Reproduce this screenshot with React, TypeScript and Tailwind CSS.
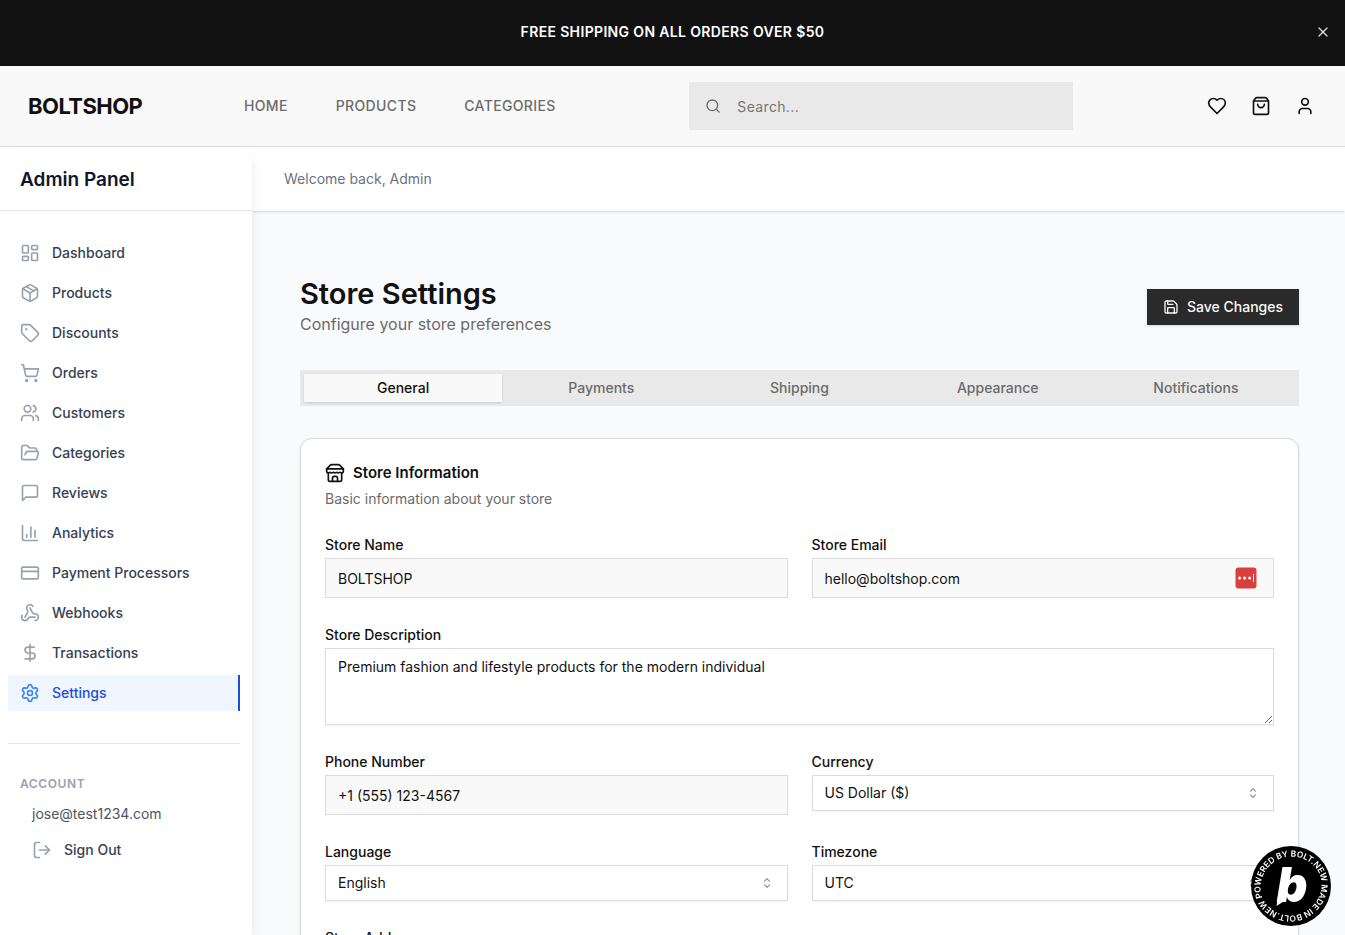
import { useState } from "react";
import type { ComponentType, ReactNode } from "react";
import {
  ChartColumn,
  CreditCard,
  DollarSign,
  FolderOpen,
  LayoutDashboard,
  LogOut,
  Package,
  Save,
  Search,
  Settings,
  ShoppingBag,
  ShoppingCart,
  Tag,
  User,
  Users,
  Webhook,
  X,
} from "lucide-react";

interface IconProps {
  className?: string;
}

interface NavItem {
  label: string;
  icon: ComponentType<IconProps>;
}

function StrokeIcon({ className, children }: { className?: string; children: ReactNode }) {
  return (
    <svg
      viewBox="0 0 24 24"
      fill="none"
      stroke="currentColor"
      strokeWidth="2"
      strokeLinecap="round"
      strokeLinejoin="round"
      aria-hidden="true"
      className={className}
    >
      {children}
    </svg>
  );
}

function HeartIcon({ className }: IconProps) {
  return (
    <StrokeIcon className={className}>
      <path d="M19 14c1.49-1.46 3-3.21 3-5.5A5.5 5.5 0 0 0 16.5 3c-1.76 0-3 .5-4.5 2-1.5-1.5-2.74-2-4.5-2A5.5 5.5 0 0 0 2 8.5c0 2.3 1.5 4.05 3 5.5l7 7Z" />
    </StrokeIcon>
  );
}

function MessageIcon({ className }: IconProps) {
  return (
    <StrokeIcon className={className}>
      <path d="M21 15a2 2 0 0 1-2 2H7l-4 4V5a2 2 0 0 1 2-2h14a2 2 0 0 1 2 2z" />
    </StrokeIcon>
  );
}

function StoreIcon({ className }: IconProps) {
  return (
    <StrokeIcon className={className}>
      <path d="m2 7 4.41-4.41A2 2 0 0 1 7.83 2h8.34a2 2 0 0 1 1.42.59L22 7" />
      <path d="M4 12v8a2 2 0 0 0 2 2h12a2 2 0 0 0 2-2v-8" />
      <path d="M15 22v-4a2 2 0 0 0-2-2h-2a2 2 0 0 0-2 2v4" />
      <path d="M2 7h20" />
      <path d="M22 7v3a2 2 0 0 1-2 2a2.7 2.7 0 0 1-1.59-.63.7.7 0 0 0-.82 0A2.7 2.7 0 0 1 16 12a2.7 2.7 0 0 1-1.59-.63.7.7 0 0 0-.82 0A2.7 2.7 0 0 1 12 12a2.7 2.7 0 0 1-1.59-.63.7.7 0 0 0-.82 0A2.7 2.7 0 0 1 8 12a2.7 2.7 0 0 1-1.59-.63.7.7 0 0 0-.82 0A2.7 2.7 0 0 1 4 12a2 2 0 0 1-2-2V7" />
    </StrokeIcon>
  );
}

const navItems: NavItem[] = [
  { label: "Dashboard", icon: LayoutDashboard },
  { label: "Products", icon: Package },
  { label: "Discounts", icon: Tag },
  { label: "Orders", icon: ShoppingCart },
  { label: "Customers", icon: Users },
  { label: "Categories", icon: FolderOpen },
  { label: "Reviews", icon: MessageIcon },
  { label: "Analytics", icon: ChartColumn },
  { label: "Payment Processors", icon: CreditCard },
  { label: "Webhooks", icon: Webhook },
  { label: "Transactions", icon: DollarSign },
  { label: "Settings", icon: Settings },
];

const tabs = ["General", "Payments", "Shipping", "Appearance", "Notifications"];

function PromoBar({ onClose }: { onClose: () => void }) {
  return (
    <div className="flex h-[66px] shrink-0 items-center bg-[#111] pb-0.5 text-white">
      <p className="flex-1 pl-9 text-center text-sm font-semibold tracking-wide uppercase">
        Free shipping on all orders over $50
      </p>
      <button type="button" aria-label="Dismiss" onClick={onClose} className="mr-2 p-1.5 text-white/80 hover:text-white">
        <X className="size-4" />
      </button>
    </div>
  );
}

function StoreHeader() {
  return (
    <header className="flex h-[81px] shrink-0 items-center justify-between border-b border-[#dcdcdc] bg-[#f9f9f9] pr-[22px] pl-7">
      <div className="flex items-center">
        <a href="#" className="w-54 text-[22px] leading-8 font-bold tracking-tight text-[#111]">BOLTSHOP</a>
        <nav className="flex gap-12 pr-2 text-sm font-medium tracking-wide text-[#6b6b6b]">
          <a href="#">HOME</a>
          <a href="#">PRODUCTS</a>
          <a href="#">CATEGORIES</a>
        </nav>
      </div>
      <div className="relative w-96">
        <Search className="pointer-events-none absolute top-4 left-4 size-4 text-[#6b6b6b]" />
        <input
          type="search"
          aria-label="Search"
          placeholder="Search..."
          className="h-12 w-full bg-[#e9e9e9] pr-4 pl-12 text-sm tracking-wide outline-none placeholder:text-[#757575]"
        />
      </div>
      <div className="flex gap-2 text-[#111]">
        <button type="button" aria-label="Wishlist" className="p-2"><HeartIcon className="size-5" /></button>
        <button type="button" aria-label="Cart" className="p-2"><ShoppingBag className="size-5" /></button>
        <button type="button" aria-label="Account" className="p-2"><User className="size-5" /></button>
      </div>
    </header>
  );
}

function Sidebar() {
  return (
    <aside className="z-10 flex w-[252px] shrink-0 flex-col bg-white shadow-lg">
      <div className="flex h-16 shrink-0 items-center border-b border-gray-200 px-5 pt-1">
        <h2 className="text-[19px] font-semibold text-gray-900">Admin Panel</h2>
      </div>
      <div className="pt-6 pr-3 pl-2">
        <nav className="flex flex-col gap-1">
          {navItems.map(({ label, icon: Icon }) => {
            const active = label === "Settings";
            return (
              <a
                key={label}
                href="#"
                className={`flex h-9 items-center gap-3 px-3 text-sm font-medium ${
                  active ? "border-r-2 border-[#1d4ed8] bg-[#eff6ff] text-[#1d4ed8]" : "text-gray-700 hover:bg-gray-50"
                }`}
              >
                <Icon className={`size-5 ${active ? "text-[#3b82f6]" : "text-gray-400"}`} />
                {label}
              </a>
            );
          })}
        </nav>
        <div className="mt-8 border-t border-gray-200 px-3 pt-8">
          <h3 className="text-xs font-semibold tracking-wider text-gray-400 uppercase">Account</h3>
          <p className="px-3 pt-3 pb-2 text-sm text-gray-600">jose@test1234.com</p>
          <button type="button" className="flex h-9 w-full items-center gap-3 px-3 text-sm font-medium text-gray-700">
            <LogOut className="size-5 text-gray-400" />
            Sign Out
          </button>
        </div>
      </div>
    </aside>
  );
}

function Field({ id, label, children }: { id: string; label: string; children: ReactNode }) {
  return (
    <div>
      <label htmlFor={id} className="flex h-[26px] items-center text-sm font-medium text-[#111]">{label}</label>
      {children}
    </div>
  );
}

function TextField({ id, label, type = "text", value, children }: { id: string; label: string; type?: string; value: string; children?: ReactNode }) {
  return (
    <Field id={id} label={label}>
      <div className="relative">
        <input
          id={id}
          type={type}
          defaultValue={value}
          className="block h-10 w-full border border-[#dcdcdc] bg-[#f9f9f9] px-3 text-sm text-[#111]"
        />
        {children}
      </div>
    </Field>
  );
}

function SelectField({ id, label, options }: { id: string; label: string; options: string[] }) {
  return (
    <Field id={id} label={label}>
      <div className="relative">
        <select id={id} className="block h-9 w-full appearance-none border border-[#dcdcdc] bg-white px-3 text-sm text-[#111] shadow-xs">
          {options.map(o => <option key={o}>{o}</option>)}
        </select>
        <svg
          viewBox="0 0 15 15"
          fill="none"
          stroke="currentColor"
          strokeWidth="1"
          strokeLinecap="round"
          strokeLinejoin="round"
          aria-hidden="true"
          className="pointer-events-none absolute top-2.5 right-[13px] size-4 text-[#111] opacity-50"
        >
          <path d="M5.25 5.75 7.5 3.5l2.25 2.25M5.25 9.25 7.5 11.5l2.25-2.25" />
        </svg>
      </div>
    </Field>
  );
}

// Password manager button shown inside the email input
function AutofillButton() {
  return (
    <button type="button" aria-label="Autofill" className="absolute top-2 right-4">
      <svg viewBox="0 0 24 24" className="size-6" aria-hidden="true">
        <rect x="1.5" y="1.5" width="21" height="21" rx="3" fill="#d9403b" />
        <circle cx="5.6" cy="12" r="1.5" fill="#fff" />
        <circle cx="10.6" cy="12" r="1.5" fill="#fff" />
        <circle cx="15.6" cy="12" r="1.5" fill="#fff" />
        <rect x="19" y="8" width="1" height="8" fill="#fff" />
      </svg>
    </button>
  );
}

function BoltBadge() {
  return (
    <a href="#" aria-label="Powered by Bolt.new" className="fixed right-3.5 bottom-[9px] z-20">
      <svg viewBox="0 0 80 80" className="size-20">
        <defs>
          <path id="badge-ring" d="M11.3 51.6A31 31 0 0 1 68.7 28.4A31 31 0 0 1 11.3 51.6" />
        </defs>
        <circle cx="40" cy="40" r="40" fill="#000" />
        <text fill="#fff" fontFamily="Inter, sans-serif" fontSize="8.4" fontWeight="600">
          <textPath href="#badge-ring">POWERED BY BOLT.NEW MADE IN BOLT.NEW</textPath>
        </text>
        <text x="41" y="56" textAnchor="middle" fill="#fff" fontFamily="Inter, sans-serif" fontSize="48" fontWeight="900" fontStyle="italic">
          b
        </text>
        <path d="M27 51 25.5 60 35 54z" fill="#fff" />
      </svg>
    </a>
  );
}

export default function App() {
  const [activeTab, setActiveTab] = useState("General");
  const [showPromo, setShowPromo] = useState(true);

  return (
    <div className="flex h-screen flex-col overflow-hidden bg-white font-[Inter,sans-serif]">
      {showPromo && <PromoBar onClose={() => setShowPromo(false)} />}
      <StoreHeader />
      <div className="flex min-h-0 flex-1">
        <Sidebar />
        <div className="flex min-w-0 flex-1 flex-col bg-[#f9fafc]">
          <div className="z-[1] flex h-16 shrink-0 items-center bg-white px-8 text-sm text-gray-500 shadow-sm">
            Welcome back, Admin
          </div>
          <main className="flex min-h-0 flex-1 flex-col gap-8 overflow-y-auto pt-[65px] pr-[46px] pb-12 pl-12 [scrollbar-width:none]">
            <div className="flex items-center justify-between">
              <div className="pb-0.5">
                <h1 className="text-[29px] leading-9 font-semibold text-[#111]">Store Settings</h1>
                <p className="text-base text-[#6b6b6b]">Configure your store preferences</p>
              </div>
              <button type="button" className="flex h-9 items-center gap-2 bg-[#2a2a2a] px-4 text-sm font-medium text-[#f9f9f9] shadow-sm">
                <Save className="size-4" />
                Save Changes
              </button>
            </div>

            <div role="tablist" className="grid h-9 shrink-0 grid-cols-5 bg-[#e9e9e9] p-1">
              {tabs.map(tab => (
                <button
                  key={tab}
                  type="button"
                  role="tab"
                  aria-selected={tab === activeTab}
                  onClick={() => setActiveTab(tab)}
                  className={`text-sm font-medium ${tab === activeTab ? "bg-[#f9f9f9] text-[#111] shadow-sm" : "text-[#6b6b6b]"}`}
                >
                  {tab}
                </button>
              ))}
            </div>

            <section className="rounded-xl border border-[#dcdcdc] bg-white p-6 shadow-sm">
              <div className="mb-[23px]">
                <h2 className="flex items-center gap-2 text-[15px] leading-5 font-semibold text-[#111]">
                  <StoreIcon className="size-5" />
                  Store Information
                </h2>
                <p className="mt-1.5 text-sm text-[#6b6b6b]">Basic information about your store</p>
              </div>
              <form className="flex flex-col gap-6">
                <div className="grid grid-cols-2 gap-6">
                  <TextField id="store-name" label="Store Name" value="BOLTSHOP" />
                  <TextField id="store-email" label="Store Email" type="email" value="hello@boltshop.com">
                    <AutofillButton />
                  </TextField>
                </div>
                <Field id="store-description" label="Store Description">
                  <textarea
                    id="store-description"
                    defaultValue="Premium fashion and lifestyle products for the modern individual"
                    className="block h-[77px] w-full border border-[#dcdcdc] bg-white px-3 py-2 text-sm text-[#111] shadow-xs"
                  />
                </Field>
                <div className="grid grid-cols-2 gap-6">
                  <TextField id="phone" label="Phone Number" type="tel" value="+1 (555) 123-4567" />
                  <SelectField id="currency" label="Currency" options={["US Dollar ($)"]} />
                  <SelectField id="language" label="Language" options={["English"]} />
                  <SelectField id="timezone" label="Timezone" options={["UTC"]} />
                </div>
                <Field id="store-address" label="Store Address">
                  <textarea id="store-address" className="block h-[77px] w-full border border-[#dcdcdc] bg-white px-3 py-2 text-sm text-[#111] shadow-xs" />
                </Field>
              </form>
            </section>
          </main>
        </div>
      </div>
      <BoltBadge />
    </div>
  );
}
